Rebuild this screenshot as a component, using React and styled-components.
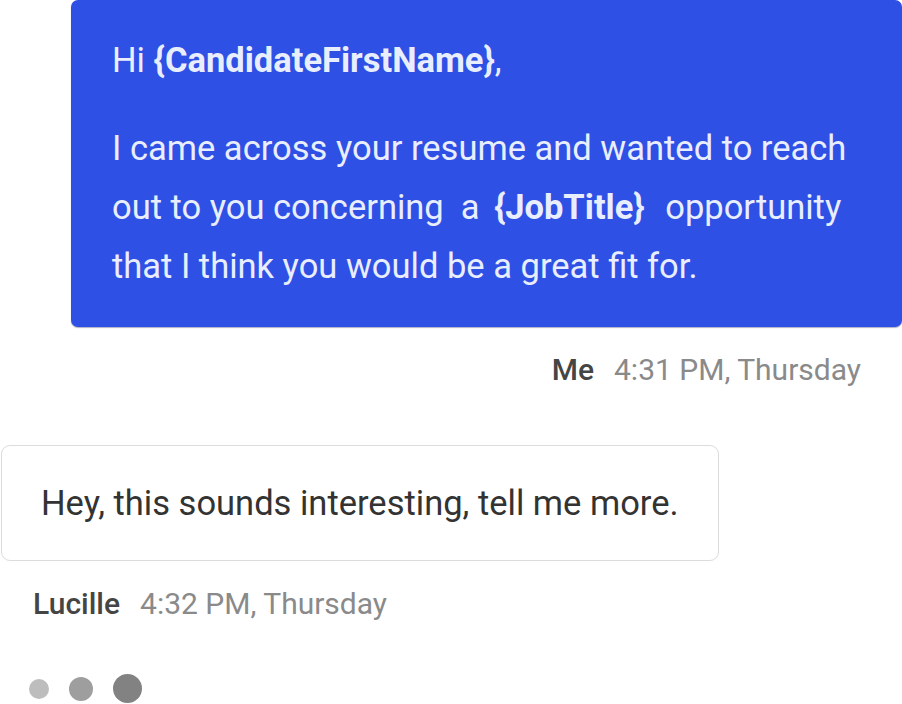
import React from 'react'
import styled, { createGlobalStyle } from 'styled-components'

const Global = createGlobalStyle`
  body {
    margin: 0;
    background: #fff;
    font-family: Roboto, "Liberation Sans", sans-serif;
  }
`

const Thread = styled.div`
  width: 902px;
  height: 704px;
  overflow: hidden;
  display: flex;
  flex-direction: column;
`

const SentBubble = styled.div`
  margin-left: 71px;
  background: #2f50e5;
  color: #e9eeff;
  border-radius: 7px;
  padding: 31px 20px 31px 41px;
  font-size: 34.5px;
  line-height: 59px;
  white-space: nowrap;
  box-shadow: 0 1px 1px rgba(20, 30, 90, 0.35);
`

const Para = styled.p`
  margin: 0;
  & + & {
    margin-top: 29px;
  }
`

const Var = styled.b`
  font-weight: 700;
  margin: 0 ${p => (p.spaced ? '12px 0 6px' : '0')};
`

const Meta = styled.div`
  display: flex;
  gap: 20px;
  font-size: 30px;
  line-height: 35px;
  color: #8a8a8a;
  justify-content: ${p => (p.right ? 'flex-end' : 'flex-start')};
  padding: ${p => (p.right ? '25px 41px 0 0' : '25px 0 0 33px')};
`

const Sender = styled.span`
  color: #454545;
  font-weight: 500;
`

const ReceivedBubble = styled.div`
  margin-top: 58px;
  margin-left: 1px;
  width: 718px;
  box-sizing: border-box;
  border: 1.5px solid #dcdcdc;
  border-radius: 9px;
  padding: 36px 0 36px 39px;
  font-size: 34.5px;
  line-height: 42px;
  white-space: nowrap;
  color: #333;
`

const Typing = styled.div`
  display: flex;
  align-items: center;
  gap: 20px;
  margin: 53px 0 0 29px;
`

const Dot = styled.span`
  width: ${p => p.size}px;
  height: ${p => p.size}px;
  border-radius: 50%;
  background: ${p => p.color};
`

export default function App() {
  return (
    <Thread>
      <Global />
      <SentBubble>
        <Para>
          Hi <Var>{'{CandidateFirstName}'}</Var>,
        </Para>
        <Para>
          I came across your resume and wanted to reach
          <br />
          out to you concerning&nbsp; a <Var spaced>{'{JobTitle}'}</Var> opportunity
          <br />
          that I think you would be a great fit for.
        </Para>
      </SentBubble>
      <Meta right>
        <Sender>Me</Sender>
        <span>4:31 PM, Thursday</span>
      </Meta>
      <ReceivedBubble>Hey, this sounds interesting, tell me more.</ReceivedBubble>
      <Meta>
        <Sender>Lucille</Sender>
        <span>4:32 PM, Thursday</span>
      </Meta>
      <Typing>
        <Dot size={20} color="#bdbdbd" />
        <Dot size={24} color="#9e9e9e" />
        <Dot size={29} color="#828282" />
      </Typing>
    </Thread>
  )
}
